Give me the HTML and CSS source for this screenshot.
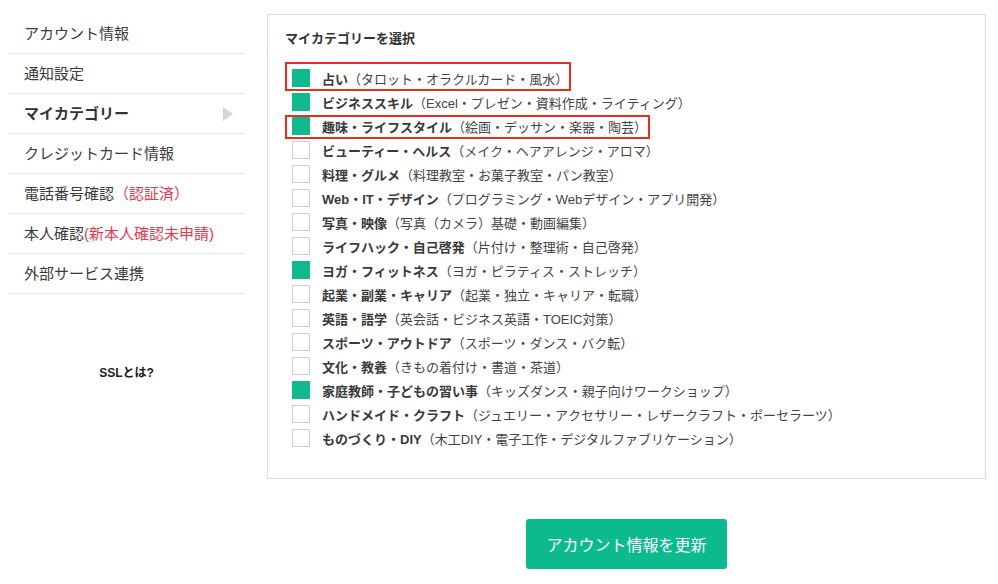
FILE: index.html
```html
<!DOCTYPE html>
<html lang="ja">
<head>
  <meta charset="UTF-8">
  <title>マイカテゴリー</title>
  <link rel="stylesheet" href="styles.css">
</head>
<body>
  <div class="page">
    <div class="side">
      <ul class="menu">
        <li>アカウント情報</li>
        <li>通知設定</li>
        <li class="current"><span>マイカテゴリー</span><span class="arrow"></span></li>
        <li>クレジットカード情報</li>
        <li>電話番号確認<span class="red">（認証済）</span></li>
        <li>本人確認<span class="red">(新本人確認未申請)</span></li>
        <li>外部サービス連携</li>
      </ul>
      <div class="ssl">SSLとは?</div>
    </div>

    <div class="main">
      <div class="panel">
        <h3>マイカテゴリーを選択</h3>
        <div class="cats">
          <label class="cat mark first"><span class="box on"></span><b>占い</b> <span class="desc">（タロット・オラクルカード・風水）</span></label>
          <label class="cat"><span class="box on"></span><b>ビジネススキル</b> <span class="desc">（Excel・プレゼン・資料作成・ライティング）</span></label>
          <label class="cat mark"><span class="box on"></span><b>趣味・ライフスタイル</b> <span class="desc">（絵画・デッサン・楽器・陶芸）</span></label>
          <label class="cat"><span class="box"></span><b>ビューティー・ヘルス</b> <span class="desc">（メイク・ヘアアレンジ・アロマ）</span></label>
          <label class="cat"><span class="box"></span><b>料理・グルメ</b> <span class="desc">（料理教室・お菓子教室・パン教室）</span></label>
          <label class="cat"><span class="box"></span><b>Web・IT・デザイン</b> <span class="desc">（プログラミング・Webデザイン・アプリ開発）</span></label>
          <label class="cat"><span class="box"></span><b>写真・映像</b> <span class="desc">（写真（カメラ）基礎・動画編集）</span></label>
          <label class="cat"><span class="box"></span><b>ライフハック・自己啓発</b> <span class="desc">（片付け・整理術・自己啓発）</span></label>
          <label class="cat"><span class="box on"></span><b>ヨガ・フィットネス</b> <span class="desc">（ヨガ・ピラティス・ストレッチ）</span></label>
          <label class="cat"><span class="box"></span><b>起業・副業・キャリア</b> <span class="desc">（起業・独立・キャリア・転職）</span></label>
          <label class="cat"><span class="box"></span><b>英語・語学</b> <span class="desc">（英会話・ビジネス英語・TOEIC対策）</span></label>
          <label class="cat"><span class="box"></span><b>スポーツ・アウトドア</b> <span class="desc">（スポーツ・ダンス・バク転）</span></label>
          <label class="cat"><span class="box"></span><b>文化・教養</b> <span class="desc">（きもの着付け・書道・茶道）</span></label>
          <label class="cat"><span class="box on"></span><b>家庭教師・子どもの習い事</b> <span class="desc">（キッズダンス・親子向けワークショップ）</span></label>
          <label class="cat"><span class="box"></span><b>ハンドメイド・クラフト</b> <span class="desc">（ジュエリー・アクセサリー・レザークラフト・ポーセラーツ）</span></label>
          <label class="cat"><span class="box"></span><b>ものづくり・DIY</b> <span class="desc">（木工DIY・電子工作・デジタルファブリケーション）</span></label>
        </div>
      </div>
      <div class="actions">
        <button>アカウント情報を更新</button>
      </div>
    </div>
  </div>
</body>
</html>
```

FILE: styles.css
```css
body {
  margin: 0;
  padding: 14px 12px 0 8px;
  font-family: "Liberation Sans", "Noto Sans CJK JP", sans-serif;
  color: #333;
  background: #fff;
}
.page {
  display: flex;
  gap: 22px;
}
.side {
  width: 237px;
  flex-shrink: 0;
}
.menu {
  list-style: none;
  margin: 0;
  padding: 0;
}
.menu li {
  display: flex;
  align-items: center;
  height: 37px;
  padding: 0 12px 2px 16px;
  border-bottom: 1px solid #e6e6e6;
  font-size: 15px;
  color: #3a3a3a;
}
.menu li.current {
  font-weight: bold;
  justify-content: space-between;
  color: #333;
}
.arrow {
  width: 0;
  height: 0;
  margin-top: 2px;
  border-top: 7px solid transparent;
  border-bottom: 7px solid transparent;
  border-left: 10px solid #d4d4d4;
}
.red {
  color: #e8384c;
}
.ssl {
  margin-top: 69px;
  text-align: center;
  font-size: 12px;
  font-weight: bold;
  color: #222;
}
.main {
  flex: 1;
}
.panel {
  border: 1px solid #dcdcdc;
  padding: 15px 17px 28px;
}
.panel h3 {
  margin: 0;
  font-size: 13px;
  line-height: 18px;
  color: #333;
}
.cats {
  margin-top: 18px;
  display: flex;
  flex-direction: column;
}
.cat {
  position: relative;
  display: flex;
  align-items: center;
  width: fit-content;
  height: 24px;
  padding: 0 3px 0 7px;
  font-size: 13px;
  white-space: pre;
  color: #333;
}
.cat b {
  color: #3a3a3a;
}
.desc {
  color: #444;
}
.box {
  width: 18px;
  height: 18px;
  box-sizing: border-box;
  border: 1px solid #cfcfcf;
  margin-right: 12px;
  background: #fff;
}
.box.on {
  border: none;
  background: #10ba8e;
}
.cat.mark::after {
  content: "";
  position: absolute;
  left: 0;
  right: 0;
  top: 1px;
  bottom: -1px;
  border: 2px solid #ee2c1c;
}
.cat.mark.first::after {
  top: -4px;
}
.actions {
  display: flex;
  justify-content: center;
  margin-top: 40px;
}
.actions button {
  height: 50px;
  padding: 0 20px;
  border: none;
  border-radius: 3px;
  background: #0cba8e;
  color: #fff;
  font-family: inherit;
  font-size: 16px;
  cursor: pointer;
}
```
